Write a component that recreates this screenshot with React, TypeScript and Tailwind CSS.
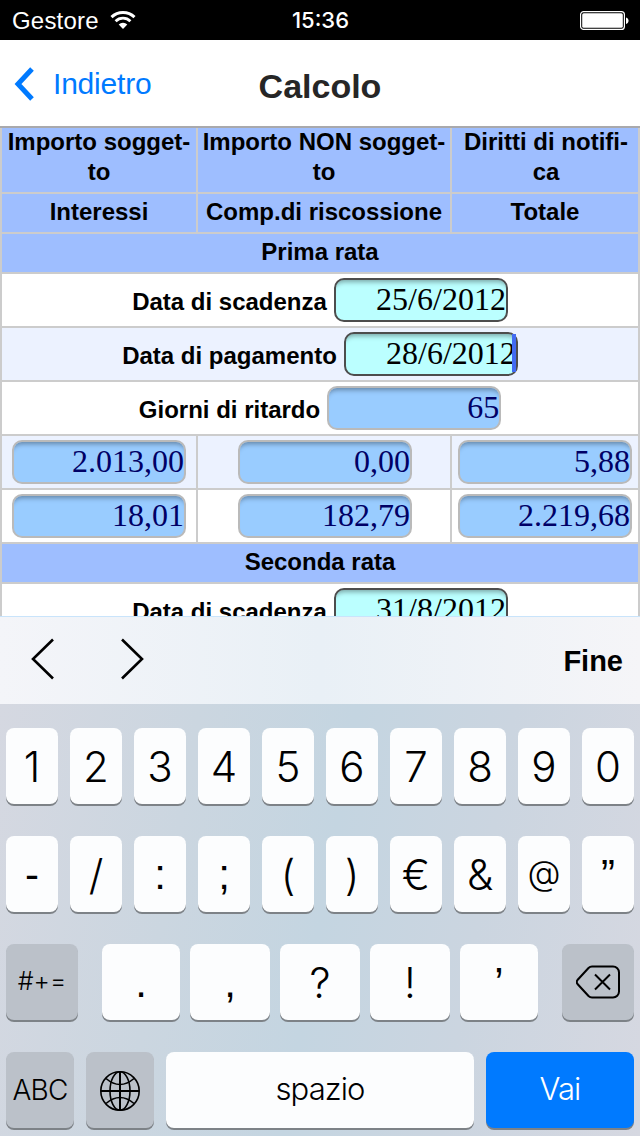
import clsx from "clsx";
import type { ReactNode } from "react";

const digitKeys = ["1", "2", "3", "4", "5", "6", "7", "8", "9", "0"];
const symbolKeys = ["-", "/", ":", ";", "(", ")", "€", "&", "@", "”"];
const punctuationKeys = [
    { label: ".", width: "w-[78px]" },
    { label: ",", width: "w-20" },
    { label: "?", width: "w-20" },
    { label: "!", width: "w-20" },
    { label: "’", width: "w-[78px]" },
];

function StatusBar() {
    return (
        <div className="grid grid-cols-3 items-center h-10 bg-black text-white text-2xl pl-3 pr-[11px]">
            <div className="flex items-center gap-[11px]">
                <span className="pt-0.5 tracking-[0.2px]">Gestore</span>
                <svg width="26" height="20" viewBox="0 0 26 20" fill="none">
                    <path
                        d="M1.5 7.2a16.5 16.5 0 0 1 23 0"
                        stroke="white"
                        strokeWidth="3"
                    />
                    <path
                        d="M5.6 11.2a10.5 10.5 0 0 1 14.8 0"
                        stroke="white"
                        strokeWidth="2.8"
                    />
                    <path
                        d="M13 19l-4.3-4.4a6.2 6.2 0 0 1 8.6 0z"
                        fill="white"
                    />
                </svg>
            </div>
            <div className="text-center font-['Inter','Liberation_Sans',sans-serif] font-medium text-[22px] pt-0.5">
                15:36
            </div>
            <svg
                className="justify-self-end"
                width="50"
                height="20"
                viewBox="0 0 50 20"
                fill="none"
            >
                <rect
                    x="1.6"
                    y="1.6"
                    width="43.8"
                    height="17.8"
                    rx="3"
                    stroke="white"
                    strokeWidth="1.2"
                />
                <rect x="3.2" y="3.2" width="40.6" height="14.6" rx="1.5" fill="white" />
                <path d="M47 7.4c3.4 1 3.4 5.6 0 6.6z" fill="white" />
            </svg>
        </div>
    );
}

function NavBar() {
    return (
        <div className="grid grid-cols-3 items-center h-[88px] bg-white border-b-2 border-[#a9a9ac]">
            <button className="flex items-center gap-[18px] pl-3.5 pt-px text-[#007aff] text-[30px] tracking-[-0.2px]">
                <svg width="21" height="34" viewBox="0 0 21 34" fill="none">
                    <path
                        d="M18 2L4 17l14 15"
                        stroke="currentColor"
                        strokeWidth="5"
                    />
                </svg>
                <span>Indietro</span>
            </button>
            <div className="text-center text-[34px] font-bold text-[#262626] pt-1.5">
                Calcolo
            </div>
        </div>
    );
}

type FieldProps = {
    value: string;
    editable?: boolean;
    focused?: boolean;
};

function Field({ value, editable, focused }: FieldProps) {
    return (
        <div
            className={clsx(
                "relative w-[174px] h-11 rounded-[10px] border-2 text-right text-[32px] leading-[39px] font-normal font-['Liberation_Serif',serif] shadow-[inset_0_7px_5px_-5px_rgba(0,0,0,0.35)]",
                editable
                    ? "bg-[#bbffff] border-[#4d4d4d] text-black"
                    : "bg-[#99ccff] border-[#bababa] text-[#000066]",
            )}
        >
            {value}
            {focused && (
                <div className="absolute top-0 right-0 w-1 h-[38px] bg-[#426bf2]" />
            )}
        </div>
    );
}

function Row({ tint, children }: { tint?: boolean; children: ReactNode }) {
    return (
        <div
            className={clsx(
                "flex items-center justify-center gap-[7px] h-[54px] border-b-2 border-[#ccc]",
                tint ? "bg-[#ecf2ff]" : "bg-white",
            )}
        >
            {children}
        </div>
    );
}

function LabelledRow({
    label,
    tint,
    ...field
}: FieldProps & { label: string; tint?: boolean }) {
    return (
        <Row tint={tint}>
            <span className="pt-1">{label}</span>
            <Field {...field} />
        </Row>
    );
}

function AmountsRow({ values, tint }: { values: string[]; tint?: boolean }) {
    return (
        <div
            className={clsx(
                "grid grid-cols-[194px_254px_188px] h-[54px] border-b-2 border-[#ccc]",
                tint ? "bg-[#ecf2ff]" : "bg-white",
            )}
        >
            {values.map((value, i) => (
                <div
                    key={i}
                    className={clsx(
                        "flex items-center justify-center",
                        i > 0 && "border-l-2 border-[#ccc]",
                        i === 1 && "pl-0.5",
                    )}
                >
                    <Field value={value} />
                </div>
            ))}
        </div>
    );
}

function SectionTitle({ children }: { children: ReactNode }) {
    return (
        <div className="h-10 pt-[3px] border-b-2 border-[#ccc] bg-[#9ebeff]">
            {children}
        </div>
    );
}

function InstallmentTable() {
    return (
        <div className="h-[488px] overflow-hidden border-x-2 border-[#ccc] text-2xl leading-[30px] font-bold text-center text-black">
            <div className="grid grid-cols-[194px_254px_188px] grid-rows-[66px_40px] bg-[#9ebeff]">
                <div className="flex items-end justify-center pl-0.5 pb-[5px] border-b-2 border-[#ccc]">
                    <span className="-ml-0.5">
                        Importo sogget-
                        <br />
                        to
                    </span>
                </div>
                <div className="flex items-end justify-center pb-[5px] border-b-2 border-l-2 border-[#ccc]">
                    <span>
                        Importo NON sogget-
                        <br />
                        to
                    </span>
                </div>
                <div className="flex items-end justify-center pl-0.5 pb-[5px] border-b-2 border-l-2 border-[#ccc]">
                    <span>
                        Diritti di notifi-
                        <br />
                        ca
                    </span>
                </div>
                <div className="pt-[3px] border-b-2 border-[#ccc]">Interessi</div>
                <div className="pt-[3px] border-b-2 border-l-2 border-[#ccc]">
                    Comp.di riscossione
                </div>
                <div className="pt-[3px] border-b-2 border-l-2 border-[#ccc]">
                    Totale
                </div>
            </div>
            <SectionTitle>Prima rata</SectionTitle>
            <LabelledRow label="Data di scadenza" value="25/6/2012" editable />
            <LabelledRow
                label="Data di pagamento"
                value="28/6/2012"
                editable
                focused
                tint
            />
            <LabelledRow label="Giorni di ritardo" value="65" />
            <AmountsRow values={["2.013,00", "0,00", "5,88"]} tint />
            <AmountsRow values={["18,01", "182,79", "2.219,68"]} />
            <SectionTitle>Seconda rata</SectionTitle>
            <LabelledRow label="Data di scadenza" value="31/8/2012" editable />
        </div>
    );
}

function KeyboardToolbar() {
    return (
        <div className="flex items-center h-[88px] pl-[30px] pr-[17px] border-t border-[#c9e4fb] bg-linear-to-r from-[#f4f5f9] via-[#e9f0f6] to-[#f5f5f8] text-black">
            <svg
                className="mb-1"
                width="116"
                height="42"
                viewBox="0 0 116 42"
                fill="none"
            >
                <path
                    d="M23 1.5L3 21l20 19.5M92 1.5L112 21 92 40.5"
                    stroke="black"
                    strokeWidth="2.6"
                />
            </svg>
            <div className="ml-auto pt-[3px] text-[29px] font-bold">Fine</div>
        </div>
    );
}

function Key({
    className,
    variant = "light",
    children,
}: {
    className?: string;
    variant?: "light" | "dark" | "primary";
    children: ReactNode;
}) {
    return (
        <button
            className={clsx(
                "flex items-center justify-center h-[76px] rounded-lg shadow-[0_2px_0_#7d8287]",
                variant === "light" && "bg-[#fcfdfe] text-black",
                variant === "dark" && "bg-[#bbc1c9] text-black",
                variant === "primary" && "bg-[#007aff] text-white",
                className,
            )}
        >
            {children}
        </button>
    );
}

// small marks look better with square dots and curled commas
function glyphStyle(key: string) {
    if (key === "@") return "text-[34px] pb-1";
    if ("-:;.,’”".includes(key)) {
        return "text-[42px] font-['Liberation_Sans',sans-serif]";
    }
    return "text-[42px]";
}

function Keyboard() {
    return (
        <div className="flex flex-col gap-8 h-[432px] px-1.5 pt-6 bg-linear-[100deg,#d5d8e1_0%,#cbd6e0_28%,#c4d5e1_50%,#cbd5e0_72%,#d6d8e1_100%] font-['Inter','Liberation_Sans',sans-serif] font-light">
            <div className="flex gap-3 text-[42px]">
                {digitKeys.map((key) => (
                    <Key key={key} className="w-[52px]">
                        {key}
                    </Key>
                ))}
            </div>
            <div className="flex gap-3">
                {symbolKeys.map((key) => (
                    <Key key={key} className={clsx("w-[52px]", glyphStyle(key))}>
                        {key}
                    </Key>
                ))}
            </div>
            <div className="flex justify-between">
                <Key variant="dark" className="w-[72px] text-[25px]">
                    #+=
                </Key>
                <div className="flex gap-2.5">
                    {punctuationKeys.map(({ label, width }) => (
                        <Key key={label} className={clsx(width, glyphStyle(label))}>
                            {label}
                        </Key>
                    ))}
                </div>
                <Key variant="dark" className="w-[72px]">
                    <svg width="44" height="34" viewBox="0 0 44 34" fill="none">
                        <path
                            d="M16 1.5H37a6 6 0 0 1 6 6V26.5a6 6 0 0 1-6 6H16Q14 32.5 12.5 31L1.5 19Q0 17 1.5 15L12.5 3Q14 1.5 16 1.5z"
                            stroke="black"
                            strokeWidth="2"
                        />
                        <path
                            d="M19 9.5l15 15M34 9.5l-15 15"
                            stroke="black"
                            strokeWidth="2"
                        />
                    </svg>
                </Key>
            </div>
            <div className="flex gap-3">
                <Key variant="dark" className="w-[68px] text-[28px] tracking-[-0.8px]">
                    ABC
                </Key>
                <Key variant="dark" className="w-[68px]">
                    <svg
                        className="mt-0.5"
                        width="40"
                        height="40"
                        viewBox="0 0 40 40"
                        fill="none"
                        stroke="black"
                        strokeWidth="1.6"
                    >
                        <circle cx="20" cy="20" r="19.2" />
                        <ellipse cx="20" cy="20" rx="10" ry="19.2" />
                        <path d="M20 1v38M1 20h38" strokeWidth="2" />
                        <path d="M6 7.5q14 12 28 0M6 32.5q14-12 28 0" />
                    </svg>
                </Key>
                <Key className="w-[308px] pb-0.5 text-[31px] tracking-[-0.9px]">
                    spazio
                </Key>
                <Key
                    variant="primary"
                    className="w-[148px] pb-0.5 text-[31px] tracking-[-0.9px]"
                >
                    Vai
                </Key>
            </div>
        </div>
    );
}

export default function App() {
    return (
        <div className="w-[640px] h-[1136px] overflow-hidden bg-white font-['Liberation_Sans',Arial,sans-serif]">
            <StatusBar />
            <NavBar />
            <InstallmentTable />
            <KeyboardToolbar />
            <Keyboard />
        </div>
    );
}
